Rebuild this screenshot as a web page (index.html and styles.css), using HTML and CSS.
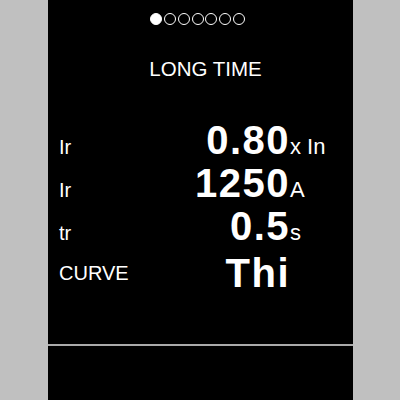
FILE: index.html
```html
<!DOCTYPE html>
<html>
<head>
<meta charset="utf-8">
<link rel="stylesheet" href="styles.css">
</head>
<body>
<div class="screen">
  <div class="dots">
    <span class="dot on"></span><span class="dot"></span><span class="dot"></span><span class="dot"></span><span class="dot"></span><span class="dot"></span><span class="dot"></span>
  </div>
  <div class="title">LONG TIME</div>
  <div class="rows">
    <div class="row">
      <span class="label">Ir</span><span class="value">0.80</span><span class="unit">x In</span>
    </div>
    <div class="row">
      <span class="label">Ir</span><span class="value">1250</span><span class="unit">A</span>
    </div>
    <div class="row">
      <span class="label">tr</span><span class="value">0.5</span><span class="unit">s</span>
    </div>
    <div class="row row-curve">
      <span class="label">CURVE</span><span class="value">Thi</span><span class="unit"></span>
    </div>
  </div>
  <div class="divider"></div>
</div>
</body>
</html>
```

FILE: styles.css
```css
html, body {
  margin: 0;
  padding: 0;
  background: #c0c0c0;
}
body {
  font-family: "Liberation Sans", Arial, sans-serif;
  color: #fff;
}
.screen {
  margin-left: 48px;
  width: 305px;
  height: 400px;
  background: #000;
  display: flex;
  flex-direction: column;
}
.dots {
  display: flex;
  justify-content: center;
  gap: 1.9px;
  padding-top: 13px;
  padding-right: 6px;
}
.dot {
  width: 12px;
  height: 12px;
  box-sizing: border-box;
  border: 1.5px solid #fff;
  border-radius: 50%;
}
.dot.on {
  background: #fff;
}
.title {
  margin-top: 34px;
  font-size: 20.5px;
  line-height: 20px;
  height: 20px;
  text-align: center;
  padding-left: 10px;
}
.rows {
  margin-top: 41px;
  display: flex;
  flex-direction: column;
  gap: 3px;
}
.row {
  display: grid;
  grid-template-columns: 100px 130px auto;
  align-items: baseline;
  padding-left: 11px;
  height: 40px;
}
.row-curve {
  margin-top: 3.7px;
}
.label {
  font-size: 20px;
  line-height: 20px;
}
.row-curve .label {
  align-self: center;
}
.value {
  font-size: 40px;
  line-height: 40px;
  font-weight: bold;
  text-align: right;
  letter-spacing: 1.5px;
  margin-right: -1px;
}
.unit {
  font-size: 22px;
  line-height: 20px;
  padding-left: 1px;
}
.divider {
  margin-top: 51px;
  height: 2px;
  background: #aaa;
}
```
